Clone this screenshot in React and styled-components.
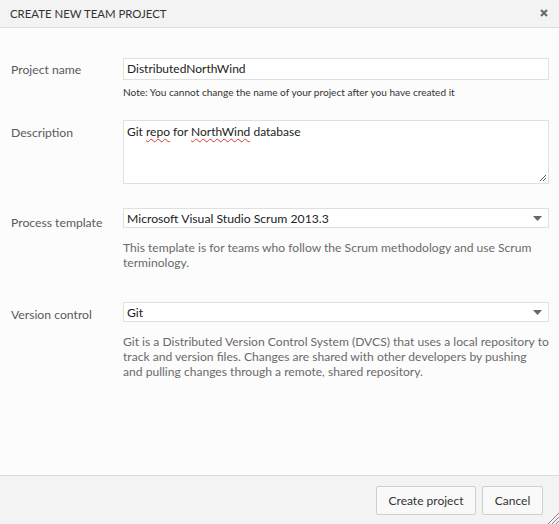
import React from "react";
import styled, { createGlobalStyle } from "styled-components";

const GlobalStyle = createGlobalStyle`
  html, body { margin: 0; padding: 0; }
  body {
    background: #fcfcfc;
    font-family: "Lato", "Liberation Sans", sans-serif;
    color: #333;
  }
  * { box-sizing: border-box; }
`;

const Dialog = styled.div`
  position: relative;
  width: 559px;
  height: 524px;
  display: flex;
  flex-direction: column;
  background: #fcfcfc;
`;

const Header = styled.div`
  height: 28px;
  flex: none;
  display: flex;
  align-items: center;
  justify-content: space-between;
  padding: 0 10px 1px 10px;
  background: #f3f3f3;
  border-bottom: 1px solid #dcdcdc;
`;

const Title = styled.h1`
  margin: 0;
  font-size: 11.4px;
  font-weight: 400;
  color: #333;
`;

const CloseButton = styled.button`
  border: 0;
  background: transparent;
  padding: 0;
  width: 10px;
  height: 10px;
  display: flex;
  align-items: center;
  justify-content: center;
  cursor: pointer;
`;

const Body = styled.div`
  flex: 1;
  padding: 30px 10px 0 11px;
`;

const Row = styled.div`
  display: grid;
  grid-template-columns: 112px 1fr;
  margin-top: ${(p) => p.$gap || 0}px;
`;

const Label = styled.label`
  font-size: 12.2px;
  line-height: 16px;
  color: #5a5a5a;
  padding-top: ${(p) => p.$top || 0}px;
`;

const FieldCol = styled.div`
  display: flex;
  flex-direction: column;
`;

const TextBox = styled.div`
  height: 22px;
  border: 1px solid #e0e0e0;
  background: #fff;
  padding: 0 3px;
  font-size: 12px;
  line-height: 20px;
  color: #222;
`;

const Note = styled.div`
  margin-top: 5px;
  font-size: 10.1px;
  line-height: 14px;
  color: #333;
`;

const TextArea = styled.div`
  position: relative;
  height: 64px;
  border: 1px solid #e0e0e0;
  background: #fff;
  padding: 2px 3px;
  font-size: 12px;
  line-height: 18px;
  color: #222;
`;

const Misspelled = styled.span`
  text-decoration: underline wavy #e03030;
  text-decoration-thickness: 1px;
  text-underline-offset: 2px;
`;

const Grip = styled.svg`
  position: absolute;
  right: 1px;
  bottom: 1px;
`;

const Select = styled.div`
  height: 20px;
  border: 1px solid #e0e0e0;
  background: #fff;
  padding: 0 6px 0 3px;
  display: flex;
  align-items: center;
  justify-content: space-between;
  font-size: 12.2px;
  color: #222;
`;

const Help = styled.p`
  margin: 12px 0 0 0;
  font-size: 12.1px;
  line-height: 15px;
  color: #6a6a6a;
`;

const Footer = styled.div`
  flex: none;
  height: 49px;
  display: flex;
  justify-content: flex-end;
  gap: 6px;
  padding: 10px 16px 0 0;
  background: #f3f3f3;
  border-top: 1px solid #dcdcdc;
`;

const Button = styled.button`
  height: 29px;
  width: ${(p) => p.$w}px;
  border: 1px solid #cfcfcf;
  background: #f9f9f9;
  border-radius: 2px;
  font-family: inherit;
  font-size: 12px;
  color: #333;
  padding: 0;
  cursor: pointer;
`;

const WindowGrip = styled.svg`
  position: absolute;
  right: 0;
  bottom: 0;
`;

const Arrow = () => (
  <svg width="9" height="5" viewBox="0 0 9 5">
    <path d="M0 0 H9 L4.5 5 Z" fill="#666" />
  </svg>
);

export default function App() {
  return (
    <>
      <GlobalStyle />
      <Dialog>
        <Header>
          <Title>CREATE NEW TEAM PROJECT</Title>
          <CloseButton aria-label="Close">
            <svg width="8" height="8" viewBox="0 0 8 8">
              <path d="M1 1 L7 7 M7 1 L1 7" stroke="#666" strokeWidth="2" />
            </svg>
          </CloseButton>
        </Header>
        <Body>
          <Row>
            <Label $top={4}>Project name</Label>
            <FieldCol>
              <TextBox>DistributedNorthWind</TextBox>
              <Note>Note: You cannot change the name of your project after you have created it</Note>
            </FieldCol>
          </Row>
          <Row $gap={21}>
            <Label $top={5}>Description</Label>
            <FieldCol>
              <TextArea>
                Git <Misspelled>repo</Misspelled> for <Misspelled>NorthWind</Misspelled> database
                <Grip width="8" height="8" viewBox="0 0 8 8">
                  <path d="M7 1 L1 7 M7 4 L4 7" stroke="#555" strokeWidth="1" />
                </Grip>
              </TextArea>
            </FieldCol>
          </Row>
          <Row $gap={24}>
            <Label $top={7}>Process template</Label>
            <FieldCol>
              <Select>
                <span>Microsoft Visual Studio Scrum 2013.3</span>
                <Arrow />
              </Select>
              <Help>This template is for teams who follow the Scrum methodology and use Scrum terminology.</Help>
            </FieldCol>
          </Row>
          <Row $gap={32}>
            <Label $top={5}>Version control</Label>
            <FieldCol>
              <Select>
                <span>Git</span>
                <Arrow />
              </Select>
              <Help>
                Git is a Distributed Version Control System (DVCS) that uses a local repository to track and
                version files. Changes are shared with other developers by pushing and pulling changes through a
                remote, shared repository.
              </Help>
            </FieldCol>
          </Row>
        </Body>
        <Footer>
          <Button $w={100}>Create project</Button>
          <Button $w={61}>Cancel</Button>
        </Footer>
        <WindowGrip width="12" height="12" viewBox="0 0 12 12">
          <path d="M12 1 L1 12 M12 5 L5 12 M12 9 L9 12" stroke="#888" strokeWidth="1" />
        </WindowGrip>
      </Dialog>
    </>
  );
}
